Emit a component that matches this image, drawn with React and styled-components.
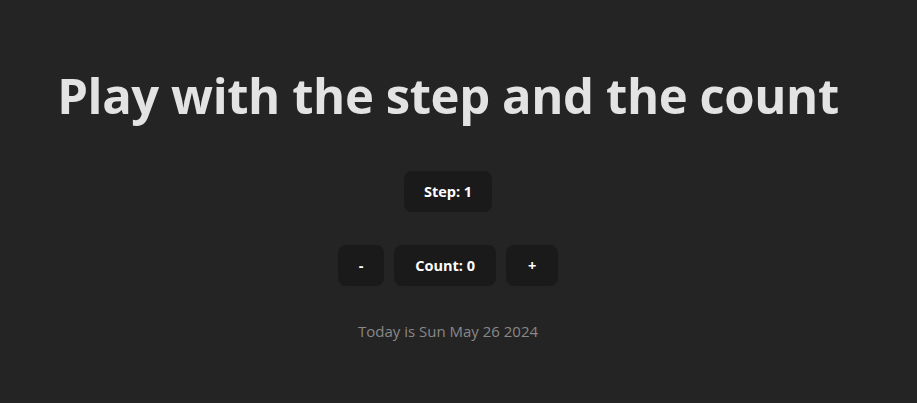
import styled, { createGlobalStyle } from "styled-components";

const GlobalStyle = createGlobalStyle`
    body {
        margin: 0;
        background: #242424;
        color: rgba(255, 255, 255, 0.87);
        font-family: "Open Sans", "Noto Sans", sans-serif;
    }
`;

const Page = styled.div`
    display: flex;
    flex-direction: column;
    align-items: center;
    padding: 67px 21px 0 0;
    min-height: 403px;
    box-sizing: border-box;
`;

const Title = styled.h1`
    margin: 0 0 48px;
    font-size: 49px;
    line-height: 56px;
    font-weight: 700;
    color: #e3e3e3;
    letter-spacing: -0.4px;
`;

const Row = styled.div`
    display: flex;
    gap: 10px;
    margin-bottom: ${(p) => p.$gap}px;
`;

const Button = styled.button`
    height: 41px;
    padding: 0 ${(p) => p.$pad || 20}px;
    border: none;
    border-radius: 8px;
    background: #1a1a1a;
    color: #ffffff;
    font-family: inherit;
    font-size: 14.5px;
    font-weight: 700;
    cursor: pointer;
`;

const DateLine = styled.p`
    margin: 0;
    font-size: 15px;
    line-height: 24px;
    color: #888888;
`;

export default function App() {
    return (
        <>
            <GlobalStyle />
            <Page>
                <Title>Play with the step and the count</Title>
                <Row $gap={33}>
                    <Button>Step: 1</Button>
                </Row>
                <Row $gap={33}>
                    <Button $pad={21}>-</Button>
                    <Button $pad={21}>Count: 0</Button>
                    <Button $pad={22}>+</Button>
                </Row>
                <DateLine>Today is Sun May 26 2024</DateLine>
            </Page>
        </>
    );
}
